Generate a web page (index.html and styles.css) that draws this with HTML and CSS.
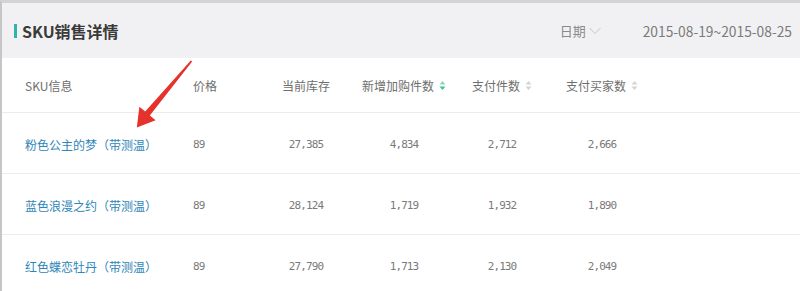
FILE: index.html
```html
<!DOCTYPE html>
<html lang="zh-CN">
<head>
<meta charset="utf-8">
<title>SKU销售详情</title>
<link rel="stylesheet" href="styles.css">
</head>
<body>
<div class="panel">
  <header class="panel-head">
    <h2 class="title"><span class="bar"></span>SKU销售详情</h2>
    <div class="filters">
      <span class="date-label">日期<svg class="chev" width="12" height="8" viewBox="0 0 12 8"><path d="M0.5 1 L6 6.5 L11.5 1" fill="none" stroke="#c4c4c4" stroke-width="1"/></svg></span>
      <span class="date-range">2015-08-19~2015-08-25</span>
    </div>
  </header>
  <div class="table">
    <div class="row head">
      <div class="cell left">SKU信息</div>
      <div class="cell left">价格</div>
      <div class="cell">当前库存</div>
      <div class="cell">新增加购件数<svg class="sort" width="7" height="11" viewBox="0 0 7 11"><path d="M0.5 4.5 L3.5 1 L6.5 4.5 Z" fill="#8fd4c1"/><path d="M0.5 6.5 L3.5 10 L6.5 6.5 Z" fill="#3fbf9c"/></svg></div>
      <div class="cell">支付件数<svg class="sort" width="7" height="11" viewBox="0 0 7 11"><path d="M0.5 4.5 L3.5 1 L6.5 4.5 Z" fill="#d4d4d4"/><path d="M0.5 6.5 L3.5 10 L6.5 6.5 Z" fill="#d4d4d4"/></svg></div>
      <div class="cell">支付买家数<svg class="sort" width="7" height="11" viewBox="0 0 7 11"><path d="M0.5 4.5 L3.5 1 L6.5 4.5 Z" fill="#d4d4d4"/><path d="M0.5 6.5 L3.5 10 L6.5 6.5 Z" fill="#d4d4d4"/></svg></div>
      <div class="cell"></div>
    </div>
    <div class="row">
      <div class="cell left link">粉色公主的梦（带测温）</div>
      <div class="cell left num">89</div>
      <div class="cell num">27,385</div>
      <div class="cell num">4,834</div>
      <div class="cell num">2,712</div>
      <div class="cell num">2,666</div>
      <div class="cell"></div>
    </div>
    <div class="row">
      <div class="cell left link">蓝色浪漫之约（带测温）</div>
      <div class="cell left num">89</div>
      <div class="cell num">28,124</div>
      <div class="cell num">1,719</div>
      <div class="cell num">1,932</div>
      <div class="cell num">1,890</div>
      <div class="cell"></div>
    </div>
    <div class="row last">
      <div class="cell left link">红色蝶恋牡丹（带测温）</div>
      <div class="cell left num">89</div>
      <div class="cell num">27,790</div>
      <div class="cell num">1,713</div>
      <div class="cell num">2,130</div>
      <div class="cell num">2,049</div>
      <div class="cell"></div>
    </div>
  </div>
  <svg class="arrow" width="70" height="80" viewBox="130 55 70 80">
    <path d="M192.2 61.6 L149.8 115.4 L155.6 120.2 L136.8 127.5 L139.4 106.8 L145.2 111.6 L190.8 60.4 Z" fill="#e5322b"/>
  </svg>
</div>
</body>
</html>
```

FILE: styles.css
```css
* { box-sizing: border-box; margin: 0; padding: 0; }

html, body {
  width: 800px;
  height: 291px;
  overflow: hidden;
  background: #ffffff;
}

body {
  font-family: "Noto Sans CJK SC", "Noto Sans", sans-serif;
  color: #666;
}

.panel {
  position: relative;
  height: 291px;
  border-top: 3px solid #d3d3d3;
  border-left: 2px solid #c6c6c6;
  background: #fff;
}

.panel-head {
  height: 55px;
  background: #f1f1f3;
  display: flex;
  align-items: center;
  justify-content: space-between;
  padding: 0 8px 0 12px;
}

.title {
  display: flex;
  align-items: center;
  font-size: 16px;
  font-weight: 700;
  color: #3a3a3a;
}

.bar {
  width: 3px;
  height: 14px;
  background: #2fb3ab;
  margin-right: 5px;
}

.filters {
  display: flex;
  align-items: center;
  gap: 42px;
}

.date-label {
  display: flex;
  align-items: center;
  font-size: 13px;
  color: #8a8a8a;
}

.chev {
  margin-left: 3px;
  margin-top: 1px;
}

.date-range {
  font-size: 13.8px;
  color: #7a7a7a;
}

.row {
  display: grid;
  grid-template-columns: 168px 65px 96px 100px 96px 104px 1fr;
  padding-left: 23px;
  height: 61px;
  padding-top: 2px;
  border-bottom: 1px solid #ececec;
  align-items: center;
}

.row.head {
  height: 55px;
  padding-top: 0;
}

.row.last {
  border-bottom: none;
}

.cell {
  display: flex;
  align-items: center;
  justify-content: center;
  font-size: 12px;
  color: #6e6e6e;
  white-space: nowrap;
}

.cell.left {
  justify-content: flex-start;
}

.sort {
  margin-left: 5px;
}

.link {
  color: #2f86b8;
}

.num {
  font-family: "DejaVu Sans Mono", monospace;
  font-size: 11px;
  letter-spacing: -0.9px;
  color: #7a7a7a;
}

.arrow {
  position: absolute;
  left: 128px;
  top: 52px;
}
```
